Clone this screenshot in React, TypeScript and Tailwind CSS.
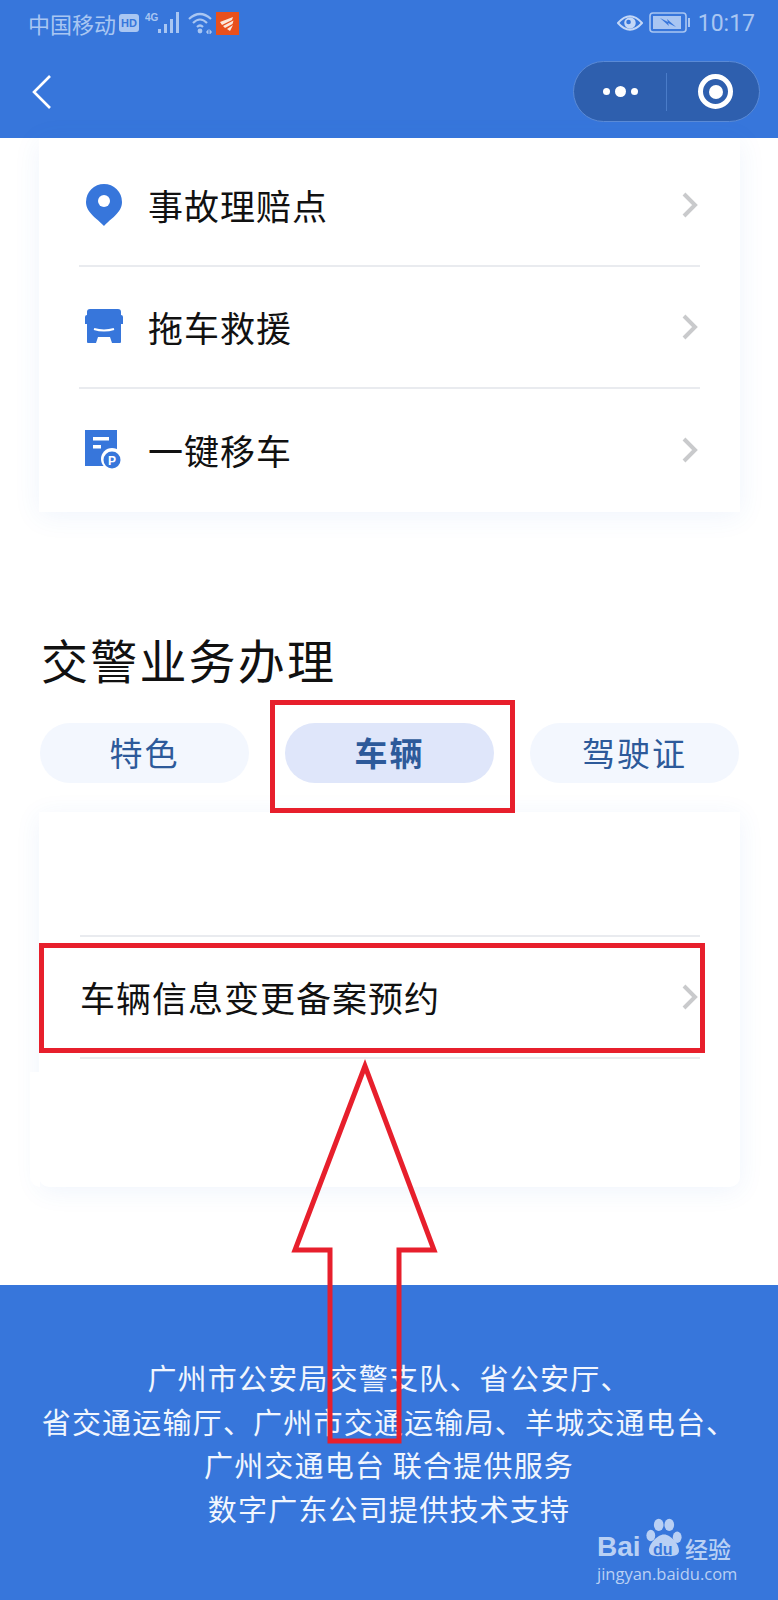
import React from "react";

const Chevron = () => (
  <svg width="16" height="26" viewBox="0 0 16 26" className="mr-[2px] shrink-0">
    <path d="M2 2 L13 13 L2 24" fill="none" stroke="#c9cacc" strokeWidth="4" />
  </svg>
);

const Pin = () => (
  <svg width="38" height="44" viewBox="0 0 38 44">
    <path d="M19 43 C13 36 1 30 1 19 A18 18 0 0 1 37 19 C37 30 25 36 19 43 Z" fill="#3776db" />
    <circle cx="19" cy="18" r="6" fill="#fff" />
  </svg>
);

const Truck = () => (
  <svg width="38" height="36" viewBox="0 0 38 36">
    <path
      d="M5 0 H33 Q36 0 36 3 V6 Q38 6 38 8 V15 H36 V33 Q36 34 35 34 H27 L25 28 H13 L11 34 H3 Q2 34 2 33 V15 H0 V8 Q0 6 2 6 V3 Q2 0 5 0 Z"
      fill="#3776db"
    />
    <path d="M9 20 Q19 23 29 20" fill="none" stroke="#fff" strokeWidth="2" />
  </svg>
);

const Doc = () => (
  <svg width="38" height="40" viewBox="0 0 38 40">
    <rect x="0" y="0" width="32" height="36" fill="#3776db" />
    <rect x="8" y="7" width="16" height="3.5" fill="#fff" />
    <rect x="8" y="15" width="8" height="3.5" fill="#fff" />
    <circle cx="27" cy="29" r="11" fill="#fff" />
    <circle cx="27" cy="30" r="8.5" fill="#3776db" />
    <text x="27" y="34.5" textAnchor="middle" fontSize="12" fontWeight="700" fill="#fff" fontFamily="Liberation Sans">
      P
    </text>
  </svg>
);

const Row = ({ icon, label, last }: { icon?: React.ReactNode; label: string; last?: boolean }) => (
  <div className={`flex h-[122px] items-center justify-between ${last ? "" : "border-b-2 border-[#e9ebef]"}`}>
    <div className="flex items-center">
      {icon && <div className="ml-[6px] mr-[25px] flex w-[38px] justify-center">{icon}</div>}
      <span className="text-[35px] tracking-[1px] text-[#111]">{label}</span>
    </div>
    <Chevron />
  </div>
);

const Tab = ({ label, active }: { label: string; active?: boolean }) => (
  <div
    className={`flex h-[60px] w-[209px] items-center justify-center rounded-full text-[33px] tracking-[2px] text-[#2d5a9a] ${
      active ? "bg-[#dfe6fa] font-bold" : "bg-[#f3f7fe]"
    }`}
  >
    {label}
  </div>
);

export default function App() {
  return (
    <div className="relative h-[1600px] w-[778px] overflow-hidden bg-white font-['Noto_Sans_CJK_SC','Liberation_Sans',sans-serif]">
      {/* header */}
      <header className="h-[138px] bg-[#3776db]">
        <div className="flex h-[46px] items-center justify-between pl-[28px] pr-[23px] text-[#a9c6f2]">
          <div className="flex items-center">
            <span className="text-[22px] leading-none">中国移动</span>
            <span className="ml-[3px] flex h-[18px] w-[20px] items-center justify-center rounded-[3px] bg-[#a9c6f2] font-['Liberation_Sans',sans-serif] text-[11px] font-bold text-[#3776db]">
              HD
            </span>
            <svg width="36" height="24" viewBox="0 0 36 24" className="ml-[6px]">
              <text x="0" y="10" fontSize="10" fontWeight="700" fill="#a9c6f2" fontFamily="Liberation Sans">
                4G
              </text>
              <rect x="13" y="18" width="3" height="4" fill="#a9c6f2" />
              <rect x="19" y="13" width="3" height="9" fill="#a9c6f2" />
              <rect x="25" y="8" width="3" height="14" fill="#a9c6f2" />
              <rect x="31" y="1" width="3" height="21" fill="#a9c6f2" />
            </svg>
            <svg width="24" height="22" viewBox="0 0 24 22" className="ml-[7px]">
              <path d="M1 7 Q12 -3 23 7 M5 11 Q12 4 19 11 M9 15 Q12 12 15 15" fill="none" stroke="#a9c6f2" strokeWidth="2.2" />
              <circle cx="12" cy="19" r="2.4" fill="#a9c6f2" />
              <path d="M18 20 l2.5 -3 v6 z M24 20 l-2.5 -3 v6 z" fill="#a9c6f2" />
            </svg>
            <svg width="23" height="23" viewBox="0 0 23 23" className="ml-[4px]">
              <rect width="23" height="23" fill="#e9501c" />
              <path d="M4 10 L17 5 L16 8 L6 13 Z M7 14 L17.5 8.5 L16.5 12 L9 16 Z M11 17 L17 13 L14 19 Z" fill="#fbe9dc" />
            </svg>
          </div>
          <div className="flex items-center">
            <svg width="26" height="18" viewBox="0 0 27 18">
              <path d="M1 9 Q13.5 -5 26 9 Q13.5 23 1 9 Z" fill="none" stroke="#c4d7f6" strokeWidth="2" />
              <circle cx="13.5" cy="9" r="6" fill="#c4d7f6" />
              <circle cx="12" cy="8" r="2.4" fill="#3776db" />
            </svg>
            <svg width="42" height="22" viewBox="0 0 42 22" className="ml-[6px]">
              <rect x="1" y="1" width="36" height="19" rx="3" fill="none" stroke="#a9c6f2" strokeWidth="1.6" />
              <rect x="4" y="4" width="28" height="13" fill="#a9c6f2" />
              <rect x="39" y="6" width="2" height="9" fill="#a9c6f2" />
              <path d="M11 6 L19 10 L18 7 L27 15 L19 11 L20 14 Z" fill="#3776db" />
            </svg>
            <span className="ml-[7px] font-['Roboto',sans-serif] text-[23px] leading-none">10:17</span>
          </div>
        </div>
        <div className="mt-[15px] flex h-[61px] items-center justify-between pl-[32px] pr-[18px]">
          <svg width="20" height="36" viewBox="0 0 20 36">
            <path d="M18 2 L2 18 L18 34" fill="none" stroke="#fff" strokeWidth="2.6" />
          </svg>
          <div className="flex h-[61px] w-[187px] items-center rounded-full border border-[#5a8ad6] bg-[#2e5fae]">
            <div className="flex w-[92px] items-center justify-center gap-[5px]">
              <span className="h-[7px] w-[7px] rounded-full bg-white" />
              <span className="h-[11px] w-[11px] rounded-full bg-white" />
              <span className="h-[7px] w-[7px] rounded-full bg-white" />
            </div>
            <div className="h-[38px] w-px bg-[#4a7cc9]" />
            <div className="flex flex-1 items-center justify-center pl-[5px]">
              <div className="flex h-[35px] w-[35px] items-center justify-center rounded-full border-[5px] border-white">
                <span className="h-[14px] w-[14px] rounded-full bg-white" />
              </div>
            </div>
          </div>
        </div>
      </header>

      {/* first card */}
      <section className="ml-[39px] w-[701px] bg-white px-[40px] pb-px pt-[7px] shadow-[0_4px_26px_rgba(55,118,219,0.08)]">
        <Row icon={<Pin />} label="事故理赔点" />
        <Row icon={<Truck />} label="拖车救援" />
        <Row icon={<Doc />} label="一键移车" last />
      </section>

      {/* title */}
      <h2 className="ml-[41px] mt-[113px] h-[68px] text-[47px] font-normal leading-[68px] tracking-[2.2px] text-[#111]">
        交警业务办理
      </h2>

      {/* tabs */}
      <div className="ml-[40px] mt-[30px] flex w-[699px] justify-between">
        <Tab label="特色" />
        <Tab label="车辆" active />
        <Tab label="驾驶证" />
      </div>

      {/* second card */}
      <section className="relative ml-[39px] mt-[29px] h-[375px] w-[701px] rounded-b-[10px] bg-white pl-[41px] pr-[40px] pt-[3px] shadow-[0_4px_26px_rgba(55,118,219,0.08)]">
        <div className="h-[122px] border-b-2 border-[#e9ebef]" />
        <Row label="车辆信息变更备案预约" />
        <div className="absolute -left-[9px] bottom-0 h-[115px] w-[10px] rounded-bl-[10px] bg-white" />
      </section>

      {/* footer */}
      <footer className="mt-[98px] h-[315px] bg-[#3776db] pt-[71px] text-center text-[29px] leading-[43.6px] tracking-[1.2px] text-[#f1f6fe]">
        <p>广州市公安局交警支队、省公安厅、</p>
        <p>省交通运输厅、广州市交通运输局、羊城交通电台、</p>
        <p>广州交通电台 联合提供服务</p>
        <p>数字广东公司提供技术支持</p>
      </footer>

      {/* annotations over the page */}
      <div className="absolute left-[270px] top-[700px] h-[113px] w-[245px] border-[5px] border-[#e71f2c]" />
      <div className="absolute left-[39px] top-[943px] h-[110px] w-[666px] border-[5px] border-[#e71f2c]" />
      <svg className="absolute left-[285px] top-[1050px]" width="165" height="400" viewBox="0 0 165 400">
        <path
          d="M80 16 L10 200 H45 V391 H114 V200 H149 Z"
          fill="none"
          stroke="#e71f2c"
          strokeWidth="5"
        />
      </svg>

      {/* watermark */}
      <div className="absolute left-[597px] top-[1515px] w-[140px] text-[#b9d0f4]">
        <div className="relative h-[50px]">
          <span className="absolute left-0 top-[15px] font-['Liberation_Sans',sans-serif] text-[28px] font-bold leading-[34px]">
            Bai
          </span>
          <svg className="absolute left-[48px] top-[2px]" width="38" height="44" viewBox="0 0 42 50">
            <ellipse cx="15" cy="9" rx="5.5" ry="7" fill="#b9d0f4" />
            <ellipse cx="27" cy="9" rx="5.5" ry="7" fill="#b9d0f4" />
            <ellipse cx="6" cy="21" rx="5" ry="6.5" fill="#b9d0f4" />
            <ellipse cx="36" cy="23" rx="5" ry="6.5" fill="#b9d0f4" />
            <path d="M21 20 C29 20 39 32 38 39 C37 45 30 45 21 44 C12 45 5 45 4 39 C3 32 13 20 21 20 Z" fill="#b9d0f4" />
          </svg>
          <span className="absolute left-[56px] top-[25px] font-['Liberation_Sans',sans-serif] text-[16px] font-bold leading-[20px] text-[#3776db]">
            du
          </span>
          <span className="absolute left-[88px] top-[18px] text-[23px] font-medium leading-[30px]">经验</span>
        </div>
        <div className="-mt-[3px] font-['Open_Sans',sans-serif] text-[16.5px] leading-[24px]">jingyan.baidu.com</div>
      </div>
    </div>
  );
}
